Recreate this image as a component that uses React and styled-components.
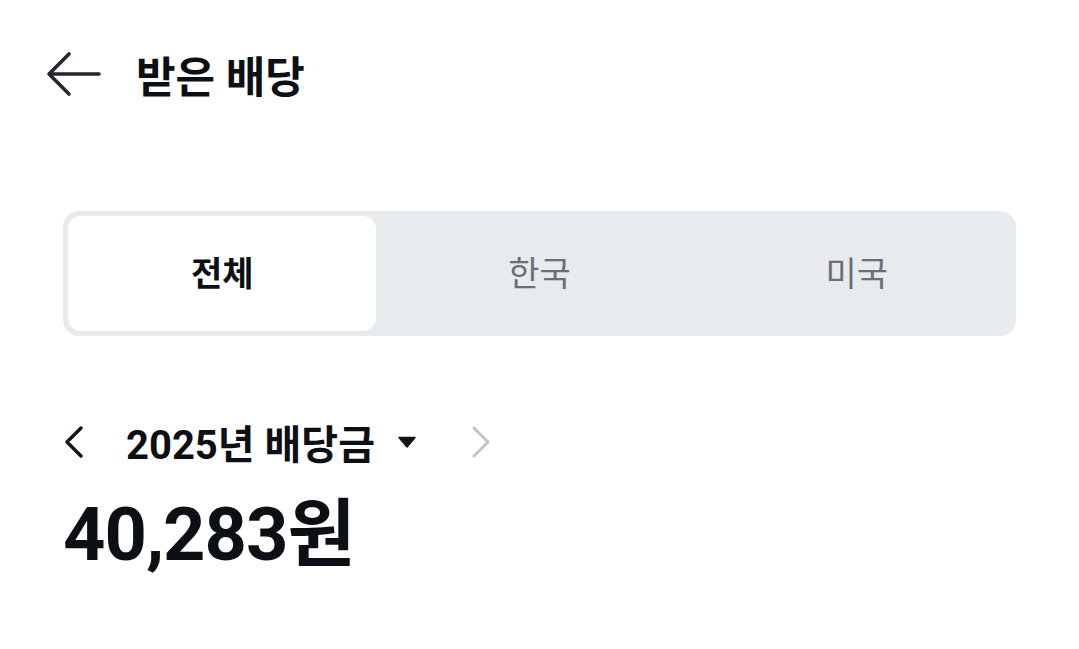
import React, { useState } from "react";
import styled, { createGlobalStyle } from "styled-components";

const GlobalStyle = createGlobalStyle`
  html, body {
    margin: 0;
    padding: 0;
    background: #ffffff;
  }
  body {
    font-family: Roboto, "Noto Sans CJK KR", sans-serif;
    color: #0c0f14;
  }
`;

const Page = styled.div`
  width: 1079px;
  height: 649px;
  box-sizing: border-box;
  padding: 0 63px;
  display: flex;
  flex-direction: column;
  overflow: hidden;
`;

const Header = styled.header`
  display: flex;
  align-items: center;
  margin-left: -17px;
  height: 75px;
  margin-top: 36px;
`;

const BackButton = styled.button`
  background: none;
  border: none;
  padding: 0;
  margin: 0 34px 0 0;
  display: flex;
  align-items: center;
  cursor: pointer;
  color: #24272b;
`;

const Title = styled.h1`
  margin: 0;
  font-size: 43px;
  font-weight: 700;
  letter-spacing: 0;
`;

const Segment = styled.div`
  margin-top: 100px;
  height: 125px;
  box-sizing: border-box;
  padding: 5px;
  border-radius: 16px;
  background: #e8ebee;
  display: grid;
  grid-template-columns: repeat(3, 1fr);
  gap: 9px;
`;

const Tab = styled.button`
  border: none;
  border-radius: 13px;
  background: ${(p) => (p.$active ? "#ffffff" : "transparent")};
  color: ${(p) => (p.$active ? "#0c0f14" : "#6b6f76")};
  font-family: Roboto, "Noto Sans CJK KR", sans-serif;
  font-size: 34px;
  font-weight: ${(p) => (p.$active ? 700 : 400)};
  display: flex;
  align-items: center;
  justify-content: center;
  padding: 0 0 4px;
  cursor: pointer;
`;

const YearRow = styled.div`
  margin-top: 78px;
  display: flex;
  align-items: center;
  height: 56px;
`;

const ArrowButton = styled.button`
  background: none;
  border: none;
  padding: 0;
  display: flex;
  align-items: center;
  color: ${(p) => (p.$disabled ? "#c2c4c8" : "#111418")};
  cursor: pointer;
`;

const YearLabel = styled.div`
  display: flex;
  align-items: center;
  margin: 0 54px 0 41px;
  font-size: 40px;
  font-weight: 700;
  gap: 23px;
`;

const Amount = styled.div`
  margin-top: 28px;
  font-size: 74px;
  font-weight: 700;
  letter-spacing: -1px;
  line-height: 1;
`;

const tabs = ["전체", "한국", "미국"];

export default function App() {
  const [active, setActive] = useState(0);
  return (
    <>
      <GlobalStyle />
      <Page>
        <Header>
          <BackButton aria-label="뒤로">
            <svg width="56" height="46" viewBox="0 0 56 46" fill="none" stroke="currentColor" strokeWidth="3.6" strokeLinecap="round" strokeLinejoin="round">
              <path d="M53 23H4" />
              <path d="M23 3L3 23l20 20" />
            </svg>
          </BackButton>
          <Title>받은 배당</Title>
        </Header>

        <Segment>
          {tabs.map((t, i) => (
            <Tab key={t} $active={active === i} onClick={() => setActive(i)}>
              {t}
            </Tab>
          ))}
        </Segment>

        <YearRow>
          <ArrowButton aria-label="이전">
            <svg width="22" height="32" viewBox="0 0 22 32" fill="none" stroke="currentColor" strokeWidth="3.4" strokeLinecap="round" strokeLinejoin="round">
              <path d="M18 2L4 16l14 14" />
            </svg>
          </ArrowButton>
          <YearLabel>
            <span>2025년 배당금</span>
            <svg width="18" height="12" viewBox="0 0 18 12">
              <path d="M1 1.5h16L9 11z" fill="#111418" stroke="#111418" strokeWidth="1.5" strokeLinejoin="round" />
            </svg>
          </YearLabel>
          <ArrowButton $disabled aria-label="다음">
            <svg width="22" height="32" viewBox="0 0 22 32" fill="none" stroke="currentColor" strokeWidth="3" strokeLinecap="round" strokeLinejoin="round">
              <path d="M4 2l14 14L4 30" />
            </svg>
          </ArrowButton>
        </YearRow>

        <Amount>40,283원</Amount>
      </Page>
    </>
  );
}
